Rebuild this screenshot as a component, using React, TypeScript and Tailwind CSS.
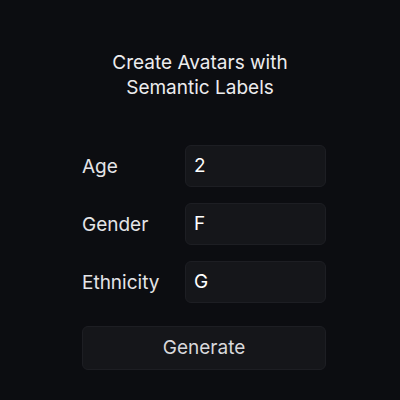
const FIELDS = [
  { label: "Age", value: "2" },
  { label: "Gender", value: "F" },
  { label: "Ethnicity", value: "G" },
];

export default function App() {
  return (
    <div className="flex min-h-[400px] w-[400px] flex-col bg-[#0c0d11] font-['Inter',sans-serif] text-[#ececee]">
      <h1 className="mt-[50px] text-center text-[19px] leading-[25px] font-normal">
        Create Avatars with
        <br />
        Semantic Labels
      </h1>

      <div className="mt-[45px] ml-[82px] flex w-[244px] flex-col gap-[16px]">
        {FIELDS.map((f) => (
          <div key={f.label} className="flex items-center">
            <span className="w-[103px] pt-[2px] text-[19px] text-[#e4e4e7]">{f.label}</span>
            <div className="flex h-[42px] flex-1 items-center rounded-[6px] border border-[#1d1e23] bg-[#15161a] px-[8px] text-[19px] text-white">
              {f.value}
            </div>
          </div>
        ))}

        <button className="mt-[7px] h-[44px] rounded-[6px] border border-[#1d1e23] bg-[#15161a] text-[19px] text-[#d8d8dc]">
          Generate
        </button>
      </div>
    </div>
  );
}
